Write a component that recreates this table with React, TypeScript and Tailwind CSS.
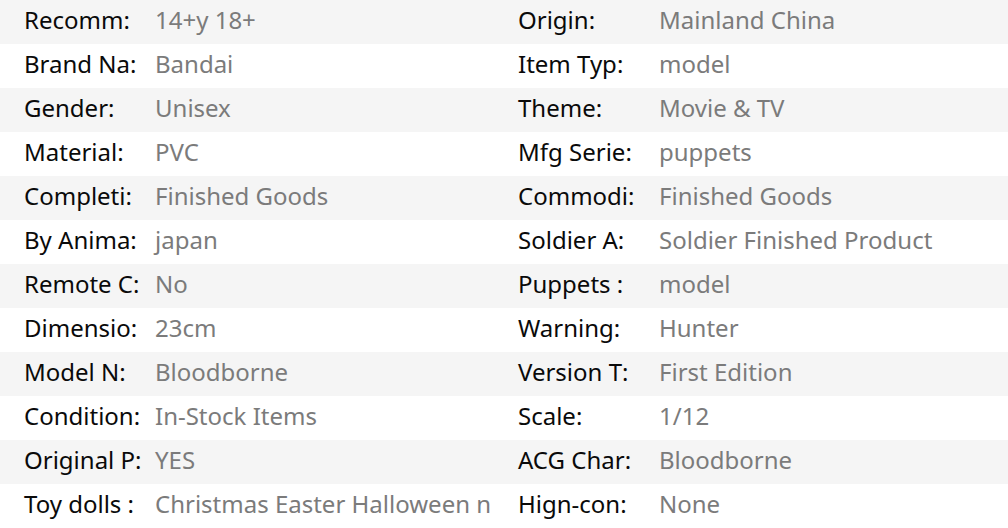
const rows: [string, string, string, string][] = [
  ["Recomm:", "14+y 18+", "Origin:", "Mainland China"],
  ["Brand Na:", "Bandai", "Item Typ:", "model"],
  ["Gender:", "Unisex", "Theme:", "Movie & TV"],
  ["Material:", "PVC", "Mfg Serie:", "puppets"],
  ["Completi:", "Finished Goods", "Commodi:", "Finished Goods"],
  ["By Anima:", "japan", "Soldier A:", "Soldier Finished Product"],
  ["Remote C:", "No", "Puppets :", "model"],
  ["Dimensio:", "23cm", "Warning:", "Hunter"],
  ["Model N:", "Bloodborne", "Version T:", "First Edition"],
  ["Condition:", "In-Stock Items", "Scale:", "1/12"],
  ["Original P:", "YES", "ACG Char:", "Bloodborne"],
  ["Toy dolls :", "Christmas Easter Halloween n", "Hign-con:", "None"],
];

export default function App() {
  return (
    <div
      className="w-[1008px] h-[528px] bg-white text-[24px] overflow-hidden"
      style={{ fontFamily: '"Noto Sans", "Noto Sans CJK SC", sans-serif' }}
    >
      {rows.map((r, i) => (
        <div
          key={i}
          className={`flex h-[44px] items-center pb-[4px] ${i % 2 === 0 ? "bg-[#f5f5f5]" : "bg-white"}`}
        >
          <div className="flex w-[504px] pl-[24px]">
            <span className="w-[131px] shrink-0 text-[#0a0a0a] whitespace-nowrap">{r[0]}</span>
            <span className="text-[#7b7b7b] whitespace-nowrap">{r[1]}</span>
          </div>
          <div className="flex pl-[14px]">
            <span className="w-[141px] shrink-0 text-[#0a0a0a] whitespace-nowrap">{r[2]}</span>
            <span className="text-[#7b7b7b] whitespace-nowrap">{r[3]}</span>
          </div>
        </div>
      ))}
    </div>
  );
}
